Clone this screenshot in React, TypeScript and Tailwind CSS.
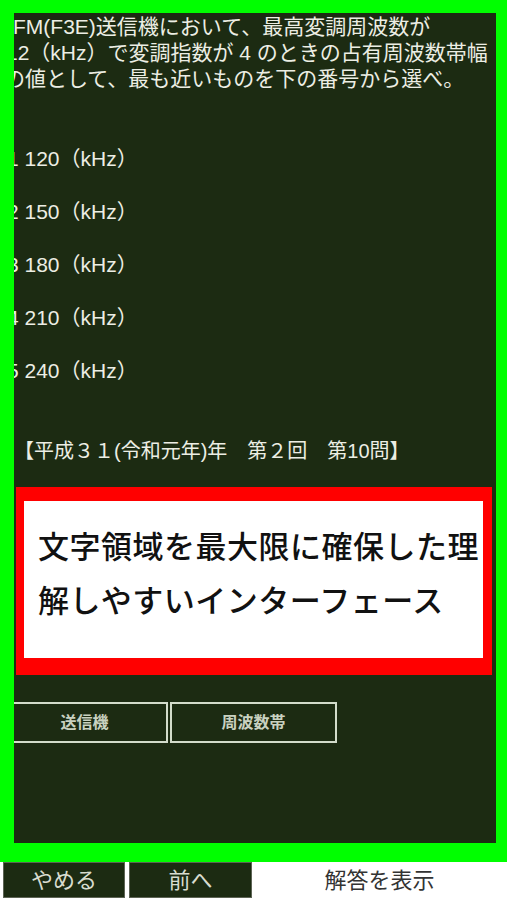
import React from "react";

const font = { fontFamily: '"Liberation Sans", "Noto Sans CJK JP", sans-serif' };

export default function App() {
  const options = ["1 120（kHz）", "2 150（kHz）", "3 180（kHz）", "4 210（kHz）", "5 240（kHz）"];
  return (
    <div className="w-[507px] h-[900px] bg-white overflow-hidden" style={font}>
      <div className="bg-[#00ff00] pt-[13px] pl-[14px] pr-[11px] pb-[19px]">
        <div className="h-[830px] bg-[#1c2b12] overflow-hidden pt-[1px] text-[#eceee4]">
          <div className="text-[21px] leading-[26px] whitespace-nowrap">
            <div className="ml-[-1px]">FM(F3E)送信機において、最高変調周波数が</div>
            <div className="ml-[-8px]">12（kHz）で変調指数が 4 のときの占有周波数帯幅</div>
            <div className="ml-[-10px]">の値として、最も近いものを下の番号から選べ。</div>
          </div>
          <div className="mt-[40px] flex flex-col text-[21px] whitespace-nowrap">
            {options.map((o) => (
              <div key={o} className="h-[53px] flex items-center ml-[-7px]">
                {o}
              </div>
            ))}
          </div>
          <div className="mt-[41px] ml-[0px] text-[20px] leading-[26px] whitespace-nowrap">
            【平成３１(令和元年)年　第２回　第10問】
          </div>
          <div className="mt-[23px] ml-[2px] w-[476px] bg-[#ff0000] pt-[14px] pl-[8px] pr-[9px] pb-[17px]">
            <div className="h-[157px] bg-white pt-[20px] pl-[14px] text-[31px] font-medium leading-[54px] tracking-[0.5px] text-[#111111] whitespace-nowrap">
              文字領域を最大限に確保した理
              <br />
              解しやすいインターフェース
            </div>
          </div>
          <div className="mt-[27px] ml-[-13px] flex gap-[2px]">
            <div className="w-[167px] h-[41px] border-2 border-[#d3dccb] flex items-center justify-center text-[16px] font-semibold text-[#c9d1c0]">
              送信機
            </div>
            <div className="w-[167px] h-[41px] border-2 border-[#d3dccb] flex items-center justify-center text-[16px] font-semibold text-[#c9d1c0]">
              周波数帯
            </div>
          </div>
        </div>
      </div>
      <div className="h-[38px] flex pl-[3px] pb-[2px]">
        <div className="w-[122px] h-[36px] bg-[#1c2b12] border border-[#5d6455] flex items-center justify-center text-[22px] text-[#d8dccf]">
          やめる
        </div>
        <div className="ml-[4px] w-[123px] h-[36px] bg-[#1c2b12] border border-[#5d6455] flex items-center justify-center text-[22px] text-[#d8dccf]">
          前へ
        </div>
        <div className="flex-1 h-[36px] flex items-center justify-center text-[22px] text-[#333333]">
          解答を表示
        </div>
      </div>
    </div>
  );
}
